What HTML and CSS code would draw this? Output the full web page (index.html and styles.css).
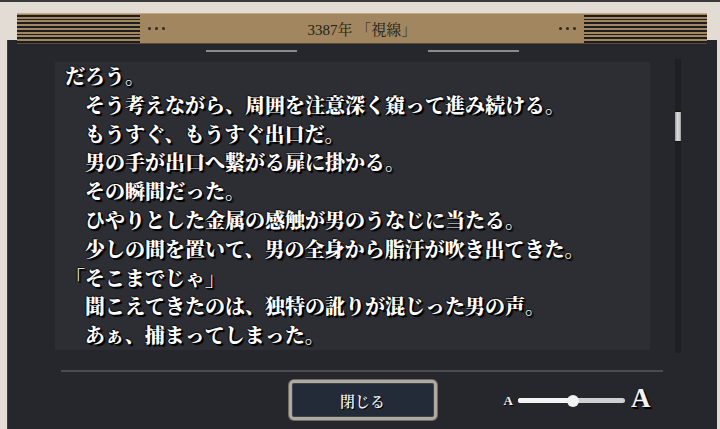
FILE: index.html
```html
<!DOCTYPE html>
<html lang="ja">
<head>
<meta charset="utf-8">
<link rel="stylesheet" href="styles.css">
</head>
<body>
<div class="topline"></div>
<header class="titlebar">
  <div class="stripes"></div>
  <div class="dots"><span></span><span></span><span></span></div>
  <div class="title">3387年 「視線」</div>
  <div class="dots"><span></span><span></span><span></span></div>
  <div class="stripes"></div>
</header>
<main class="panel">
  <div class="deco"><span></span><span></span></div>
  <div class="content-row">
    <div class="textbox">
      <div class="text">
        <p>だろう。</p>
        <p>　そう考えながら、周囲を注意深く窺って進み続ける。</p>
        <p>　もうすぐ、もうすぐ出口だ。</p>
        <p>　男の手が出口へ繋がる扉に掛かる。</p>
        <p>　その瞬間だった。</p>
        <p>　ひやりとした金属の感触が男のうなじに当たる。</p>
        <p>　少しの間を置いて、男の全身から脂汗が吹き出てきた。</p>
        <p>「そこまでじゃ」</p>
        <p>　聞こえてきたのは、独特の訛りが混じった男の声。</p>
        <p>　あぁ、捕まってしまった。</p>
      </div>
    </div>
    <div class="track"><div class="thumb"></div></div>
  </div>
  <div class="divider"></div>
  <div class="bottom-row">
    <button class="close-btn">閉じる</button>
    <div class="fontsize">
      <span class="a-small">A</span>
      <div class="slider"><div class="fill"></div><div class="knob"></div></div>
      <span class="a-big">A</span>
    </div>
  </div>
</main>
</body>
</html>
```
FILE: styles.css
```css
* { box-sizing: border-box; }
html, body { margin: 0; padding: 0; }
body {
  width: 720px;
  height: 429px;
  overflow: hidden;
  background: #e3dcd4;
  font-family: "Liberation Serif", "Noto Serif CJK JP", "Noto Sans CJK JP", serif;
}
.topline { height: 2px; background: #3a3a3c; }

.titlebar {
  position: relative;
  z-index: 1;
  display: flex;
  align-items: center;
  height: 30px;
  margin: 11px 13px 0 17px;
  background: #a2865f;
  border-top: 1px solid #c2a983;
  box-shadow: 0 1px 0 #5b4c37;
}
.stripes {
  width: 123px;
  height: 28px;
  align-self: flex-end;
  background: repeating-linear-gradient(to bottom, #1d1d20 0, #1d1d20 1.7px, #a2865f 1.7px, #a2865f 3.7px);
}
.dots { display: flex; gap: 4px; margin: 0 8px; }
.dots span { width: 3px; height: 3px; border-radius: 50%; background: #2e2820; }
.title {
  flex: 1;
  text-align: center;
  font-size: 15px;
  color: #231e18;
}

.panel {
  margin: -3px 3px 0 7px;
  height: 391px;
  background: #26272c;
  border-left: 1px solid #3e3f44;
  padding-top: 10px;
}
.deco {
  display: flex;
  justify-content: center;
  gap: 131px;
  height: 2px;
}
.deco span { width: 91px; height: 2px; background: #8b8b8e; }

.content-row {
  display: flex;
  margin-top: 7px;
  padding-left: 47px;
  height: 294px;
}
.textbox {
  width: 595px;
  margin: 3px 0 3px;
  background: #2d2e34;
  overflow: hidden;
}
.text {
  padding-left: 10px;
  font-family: "Noto Serif CJK JP", "Noto Sans CJK JP", serif;
  font-size: 20px;
  font-weight: 900;
  line-height: 28.8px;
  color: #fdfdfd;
  text-shadow: 1px 1px 0 #000, 2px 2px 1px #000, -1px 0 1px rgba(0,0,0,0.7), 0 -1px 1px rgba(0,0,0,0.7);
}
.text p { margin: 0; white-space: nowrap; }

.track {
  width: 6px;
  margin-left: 25px;
  background: #1e1f23;
  padding-top: 52px;
}
.thumb {
  height: 31px;
  background: linear-gradient(to right, #9a9a9a, #d8d8d8 40%, #cfcfcf 70%, #9a9a9a);
  border-top: 1px solid #111;
  border-bottom: 1px solid #111;
  border-radius: 1px;
}

.divider {
  height: 2px;
  margin: 17px 0 0 53px;
  width: 602px;
  background: #4a4c52;
}

.bottom-row {
  display: grid;
  grid-template-columns: 1fr auto 1fr;
  align-items: center;
  margin-top: 8px;
}
.close-btn {
  grid-column: 2;
  width: 148px;
  height: 40px;
  padding: 0;
  border: 3px solid #b0aa9c;
  border-radius: 5px;
  background: #232a38;
  box-shadow: inset 0 0 0 1px #3c4350, 0 0 0 1px #6f6b63;
  color: #f3f3f3;
  font-family: "Noto Serif CJK JP", "Liberation Serif", serif;
  font-size: 15px;
  font-weight: 600;
  text-shadow: 1px 1px 0 #000;
}
.fontsize {
  grid-column: 3;
  justify-self: start;
  display: flex;
  align-items: center;
  margin-left: 67px;
}
.a-small {
  font-family: "Liberation Serif", serif;
  font-weight: 700;
  font-size: 13px;
  color: #f4f4f4;
  text-shadow: 1px 1px 0 #000;
  margin-right: 5px;
  margin-top: 2px;
}
.slider {
  position: relative;
  width: 107px;
  height: 5px;
  border-radius: 3px;
  background: #cfcfcf;
}
.fill {
  width: 55px;
  height: 5px;
  border-radius: 3px;
  background: #f4f4f4;
}
.knob {
  position: absolute;
  left: 49px;
  top: -3px;
  width: 12px;
  height: 12px;
  border-radius: 50%;
  background: #f2f2f2;
}
.a-big {
  font-family: "Liberation Serif", serif;
  font-weight: 700;
  font-size: 27px;
  line-height: 1;
  color: #f4f4f4;
  text-shadow: 1px 1px 0 #000, 2px 2px 1px #000;
  margin-left: 6px;
  margin-top: -4px;
}
```
